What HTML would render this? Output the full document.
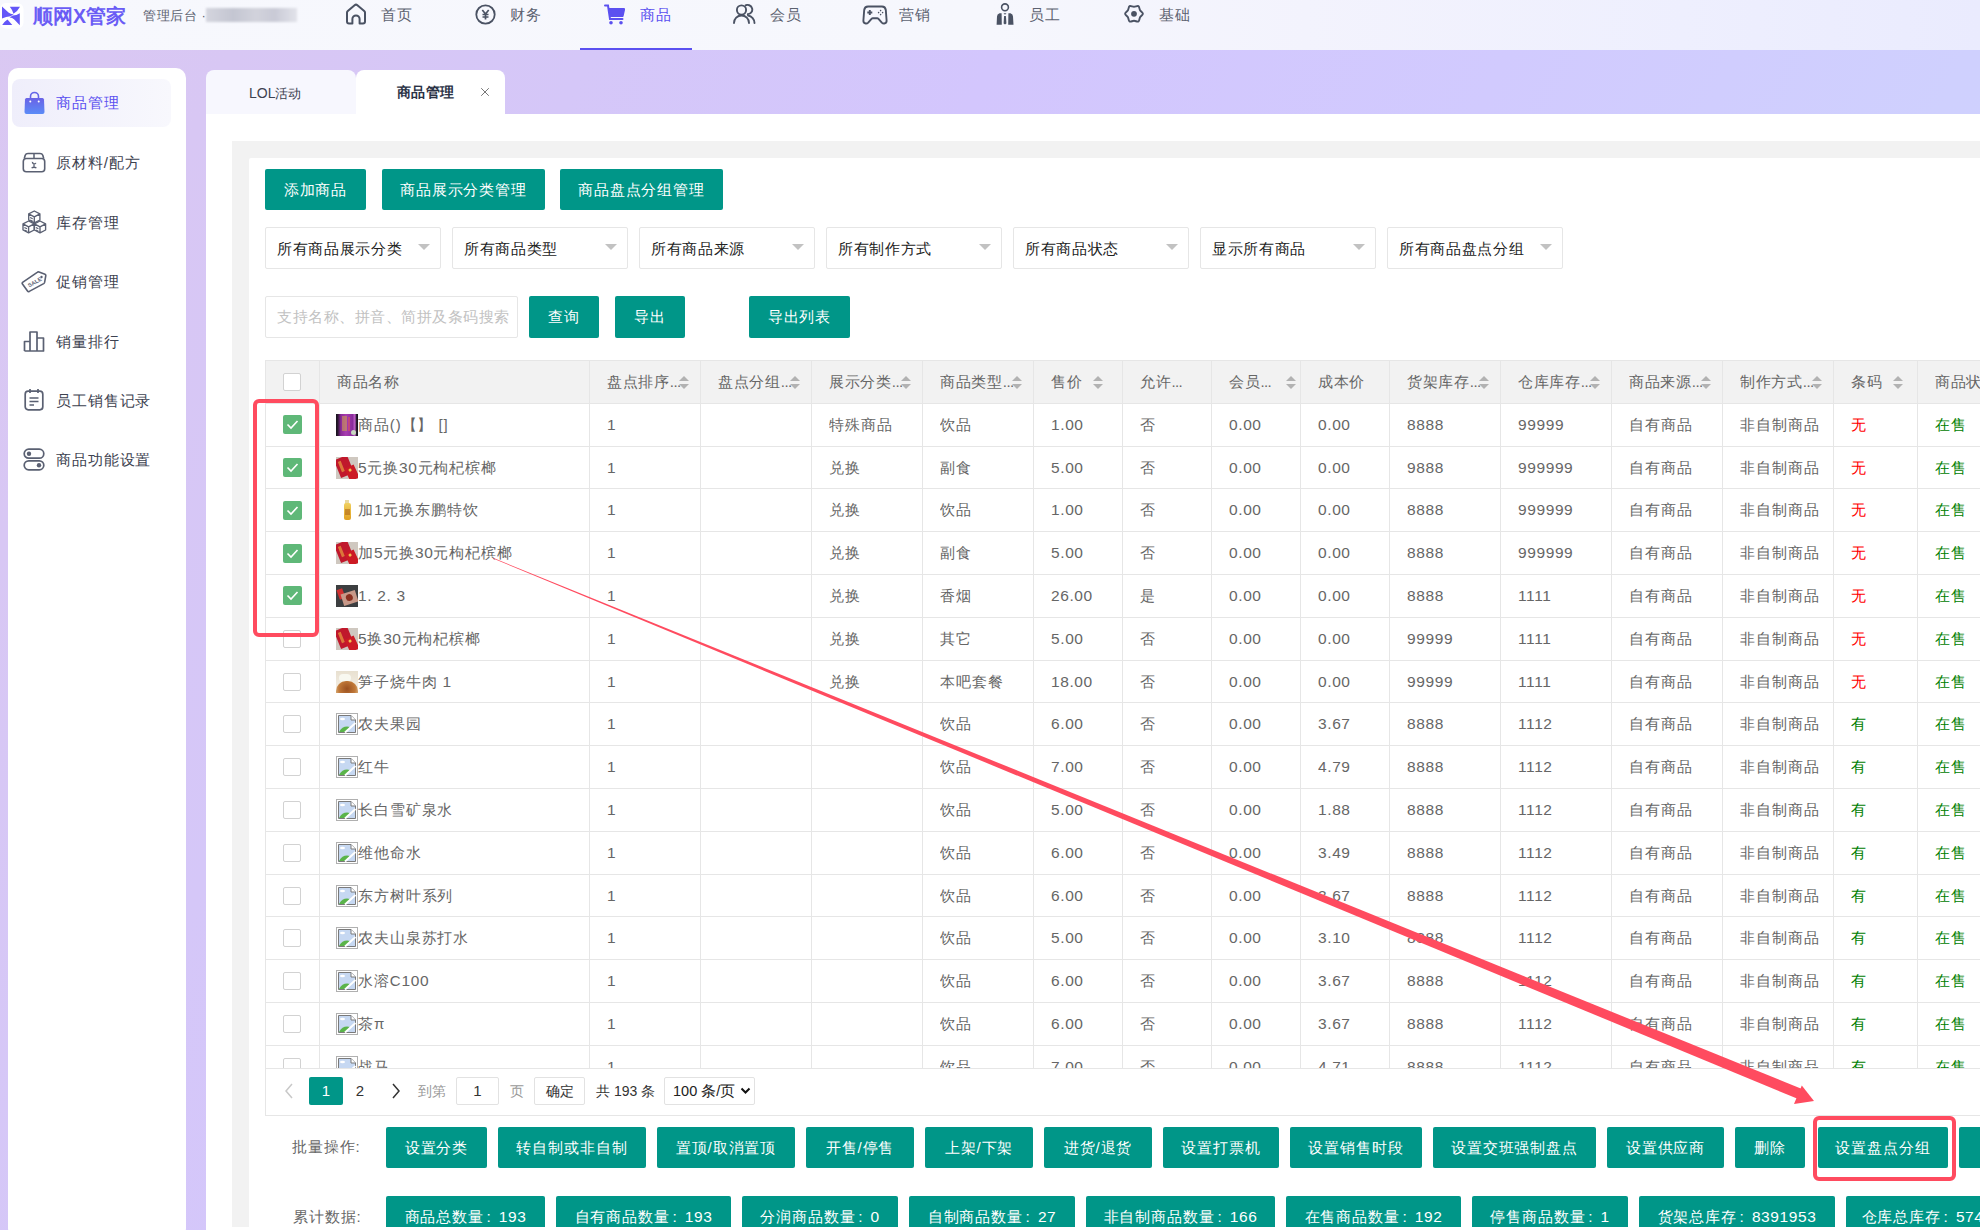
<!DOCTYPE html><html><head><meta charset="utf-8"><title>商品管理</title><style>
*{box-sizing:border-box;margin:0;padding:0}
html,body{width:1980px;height:1230px;overflow:hidden}
body{position:relative;font-family:"Liberation Sans",sans-serif;font-size:15px;color:#333;
 background:linear-gradient(115deg,#dac8f2 0%,#d8c7f4 10%,#d5c7f8 24%,#d3c6fd 40%,#d1cafe 60%,#cfd0fe 78%,#cfd2fe 100%)}
.abs{position:absolute}
.hdr{position:absolute;left:0;top:0;width:1980px;height:50px;background:linear-gradient(90deg,#f7f8fd 0%,#f6f7fd 50%,#f3f3fd 66%,#eeeffe 85%,#eaebfe 100%)}
.nav{position:absolute;top:7px;font-size:15px;line-height:16px;color:#5c6270;white-space:nowrap}
.nav.on{color:#5b50f0}
.ico{position:absolute}
.side{position:absolute;left:8px;top:68px;width:178px;height:1170px;background:#fff;border-radius:10px}
.sitem{position:absolute;left:56px;font-size:15px;line-height:20px;color:#3d4250;white-space:nowrap}
.tab{position:absolute;top:70px;height:44px;border-radius:8px 8px 0 0}
.main{position:absolute;left:206px;top:114px;width:1774px;height:1116px;background:#fff}
.gray{position:absolute;left:232px;top:141px;width:1748px;height:1086px;background:#f2f2f2;overflow:hidden}
.inner{position:absolute;left:249px;top:158px;width:1731px;height:1069px;background:#fff;border-radius:2px 0 0 0;overflow:hidden}
.btn{position:absolute;height:41px;background:#009688;color:#fff;border-radius:2px;font-size:15px;line-height:41px;text-align:center;white-space:nowrap}
.sel{position:absolute;top:227px;width:176px;height:42px;border:1px solid #e6e6e6;background:#fff;border-radius:2px}
.sel span{position:absolute;left:11px;top:10.5px;line-height:20px;font-size:15px;color:#222;white-space:nowrap;letter-spacing:0.65px!important}
.sel i{position:absolute;right:10px;top:16px;width:0;height:0;border-left:6px solid transparent;border-right:6px solid transparent;border-top:6px solid #c2c2c2}
.cell{position:absolute;font-size:15px;line-height:20px;color:#666;white-space:nowrap;overflow:hidden}
.hline{position:absolute;height:1px;background:#e6e6e6}
.vline{position:absolute;width:1px;background:#e6e6e6}
.cb{position:absolute;width:18px;height:18px;border:1px solid #d2d2d2;border-radius:2px;background:#fff}
.cbon{position:absolute;width:19px;height:19px;border-radius:2px;background:#5fb878}
.sort{position:absolute;width:10px;height:13px}
.sort:before{content:"";position:absolute;left:0;top:0;border-left:5px solid transparent;border-right:5px solid transparent;border-bottom:5px solid #b2b2b2}
.sort:after{content:"";position:absolute;left:0;top:8px;border-left:5px solid transparent;border-right:5px solid transparent;border-top:5px solid #b2b2b2}
.red{color:#ff0000}.green{color:#008000}
.cj{letter-spacing:0.9px}
.n{font-size:15.5px;letter-spacing:0.6px}
.co{display:inline-block;margin-left:2.5px;margin-right:8px;font-size:15.5px;letter-spacing:0}
.btn,.cell,.sel span,.sitem,.nav{letter-spacing:0.9px}
</style></head><body>
<div class="hdr"></div>
<svg class="ico" style="left:0px;top:3px" width="24" height="26" viewBox="0 3 24 26">
<rect x="0" y="3" width="23.5" height="25.5" rx="6" fill="#fff"/>
<path d="M9.8 6.8 H20 Q17.5 11.5 13.5 13.8 Q12.5 10 9.8 6.8 Z" fill="#6356f8"/>
<path d="M2 6.6 L8.5 12.6 Q11 14.6 13.8 14.3 L10.5 16.2 Q6 16.4 2 18.6 Z" fill="#6356f8"/>
<path d="M19.8 13.2 V25.2 L14 19.2 Q12 17.4 9.5 17.6 L12.8 15.6 Q16.5 15.3 19.8 13.2 Z" fill="#6356f8"/>
<path d="M2.2 25 H12.3 L7.5 19.6 Q4.5 21.5 2.2 25 Z" fill="#6356f8"/>
</svg>
<div class="abs" style="left:33px;top:5px;font-size:19.5px;line-height:22px;font-weight:bold;color:#6a5cf5;letter-spacing:0px;white-space:nowrap">顺网X管家</div>
<div class="abs" style="left:143px;top:7.5px;font-size:13px;line-height:16px;color:#5c6270;letter-spacing:0.6px;white-space:nowrap">管理后台 ·</div>
<div class="abs" style="left:206px;top:8px;width:91px;height:14px;background:linear-gradient(90deg,#d4d5de,#c4c6d2 30%,#d2d3dc 55%,#c9cad6 75%,#e2e3ea);filter:blur(1.2px)"></div>
<div class="nav" style="left:381px">首页</div>
<svg class="ico" style="left:345px;top:3px" width="22" height="22" viewBox="0 0 22 22"><path d="M2 9.6 Q2 8.6 2.8 7.9 L9.6 2.2 Q11 1.1 12.4 2.2 L19.2 7.9 Q20 8.6 20 9.6 V18.6 Q20 20.6 18 20.6 H14.6 V16 a3.6 3.6 0 0 0 -7.2 0 V20.6 H4 Q2 20.6 2 18.6 Z" fill="none" stroke="#4a5263" stroke-width="2" stroke-linejoin="round"/></svg>
<div class="nav" style="left:510px">财务</div>
<svg class="ico" style="left:475px;top:4px" width="21" height="21" viewBox="0 0 21 21"><circle cx="10.5" cy="10.5" r="9.2" fill="none" stroke="#4a5263" stroke-width="1.8"/><path d="M7.3 6 L10.5 10 L13.7 6 M10.5 10 V15.5 M7.5 10.5 H13.5 M7.5 13 H13.5" fill="none" stroke="#4a5263" stroke-width="1.7"/></svg>
<div class="nav on" style="left:640px">商品</div>
<svg class="ico" style="left:604px;top:4px" width="22" height="21" viewBox="0 0 22 21"><path d="M1 1.5 H4 L6 15 H18.5" fill="none" stroke="#5b50f0" stroke-width="2" stroke-linecap="round"/><path d="M4.5 4 H20 Q21.5 4 21 6 L19.5 12.5 Q19 13 18 13 H6.2 Z" fill="#5b50f0"/><circle cx="7" cy="18.8" r="1.8" fill="#5b50f0"/><circle cx="17" cy="18.8" r="1.8" fill="#5b50f0"/></svg>
<div class="nav" style="left:770px">会员</div>
<svg class="ico" style="left:733px;top:4px" width="23" height="20" viewBox="0 0 23 20"><circle cx="8.5" cy="6" r="4.6" fill="none" stroke="#4a5263" stroke-width="1.9"/><path d="M1 19 a7.5 7.5 0 0 1 15 0" fill="none" stroke="#4a5263" stroke-width="1.9" stroke-linecap="round"/><path d="M12 1.8 a4.6 4.6 0 1 1 2 8.3" fill="none" stroke="#4a5263" stroke-width="1.9"/><path d="M15 11.5 a7.5 7.5 0 0 1 6.5 7.5" fill="none" stroke="#4a5263" stroke-width="1.9" stroke-linecap="round"/></svg>
<div class="nav" style="left:899px">营销</div>
<svg class="ico" style="left:862px;top:5px" width="26" height="20" viewBox="0 0 26 20"><path d="M6 1.5 H20 Q23.3 1.5 23.8 5 L24.6 15.5 Q24.8 18.2 22.2 18.5 Q20.8 18.6 19.8 17.6 L16.5 13.8 Q16 13.3 15.2 13.3 H10.8 Q10 13.3 9.5 13.8 L6.2 17.6 Q5.2 18.6 3.8 18.5 Q1.2 18.2 1.4 15.5 L2.2 5 Q2.7 1.5 6 1.5 Z" fill="none" stroke="#4a5263" stroke-width="1.9" stroke-linejoin="round"/><path d="M7.8 5 V10 M5.3 7.5 H10.3" stroke="#4a5263" stroke-width="1.9"/><circle cx="18.6" cy="5.6" r="0.8" fill="#4a5263"/><circle cx="18.6" cy="9.6" r="0.8" fill="#4a5263"/><circle cx="16.6" cy="7.6" r="0.8" fill="#4a5263"/><circle cx="20.6" cy="7.6" r="0.8" fill="#4a5263"/></svg>
<div class="nav" style="left:1029px">员工</div>
<svg class="ico" style="left:996px;top:2px" width="19" height="24" viewBox="0 0 19 24"><circle cx="9" cy="5.3" r="3.4" fill="none" stroke="#4a5263" stroke-width="1.6"/><path d="M3.5 11.2 Q1 12 1 14.5 L0.6 22.8 H5.8 L5.6 11.2 Z" fill="#4a5263"/><path d="M14.5 11.2 Q17 12 17 14.5 L17.5 22.8 H12.2 L12.4 11.2 Z" fill="#4a5263"/><path d="M7.5 11.3 H10.5 L9 12.8 Z" fill="#4a5263"/><path d="M8.1 14 H9.9 L10.4 21.5 L9 22.6 L7.6 21.5 Z" fill="#4a5263"/></svg>
<div class="nav" style="left:1159px">基础</div>
<svg class="ico" style="left:1123px;top:3px" width="22" height="22" viewBox="0 0 22 22"><path d="M19.90 10.80 C19.90 11.97 17.80 13.02 17.06 14.30 C16.32 15.58 16.46 17.92 15.45 18.51 C14.44 19.09 12.48 17.80 11.00 17.80 C9.52 17.80 7.56 19.09 6.55 18.51 C5.54 17.92 5.68 15.58 4.94 14.30 C4.20 13.02 2.10 11.97 2.10 10.80 C2.10 9.63 4.20 8.58 4.94 7.30 C5.68 6.02 5.54 3.68 6.55 3.09 C7.56 2.51 9.52 3.80 11.00 3.80 C12.48 3.80 14.44 2.51 15.45 3.09 C16.46 3.68 16.32 6.02 17.06 7.30 C17.80 8.58 19.90 9.63 19.90 10.80 Z" fill="none" stroke="#4a5263" stroke-width="1.9"/><circle cx="11" cy="10.8" r="2.9" fill="#4a5263"/></svg>
<div class="abs" style="left:580px;top:48px;width:112px;height:2px;background:#5b50f0"></div>
<div class="side"></div>
<div class="abs" style="left:12px;top:79px;width:159px;height:48px;border-radius:8px;background:linear-gradient(90deg,#efeefb,#f8f8fd)"></div>
<div class="sitem" style="top:93px;color:#5b50f0">商品管理</div>
<svg class="ico" style="left:24px;top:91px" width="21" height="24" viewBox="0 0 21 24"><defs><linearGradient id="bg1" x1="0" y1="0" x2="0" y2="1"><stop offset="0" stop-color="#6a62e6"/><stop offset="1" stop-color="#5b8cf7"/></linearGradient></defs><path d="M6.5 8 V5.5 a4 4 0 0 1 8 0 V8" fill="none" stroke="#6466e8" stroke-width="1.6"/><path d="M2.5 7 H18.5 Q19.8 7 20 8.5 L20.5 21 Q20.5 23 18.5 23 H2.5 Q0.5 23 0.5 21 L1 8.5 Q1.2 7 2.5 7 Z" fill="url(#bg1)"/><circle cx="6.3" cy="10.5" r="1" fill="#fff"/><circle cx="14.7" cy="10.5" r="1" fill="#fff"/></svg>
<div class="sitem" style="top:153px;color:#3d4250">原材料/配方</div>
<svg class="ico" style="left:22px;top:152px" width="24" height="21" viewBox="0 0 24 21"><path d="M2.3 6.5 L3.2 3.2 Q3.9 1.5 6 1.5 H18 Q20.1 1.5 20.8 3.2 L21.7 6.5" fill="none" stroke="#5a6072" stroke-width="1.6" stroke-linejoin="round"/><rect x="1.3" y="6.5" width="21.4" height="13.2" rx="3" fill="none" stroke="#5a6072" stroke-width="1.6"/><path d="M12 1.5 V6.5" stroke="#5a6072" stroke-width="1.5"/><path d="M9.6 9.8 Q11.2 9.3 12 11.6 Q13 10.6 14.5 10.9 Q13.6 12.7 12 12.6 Q10 12.4 9.6 9.8 Z" fill="#5a6072"/><path d="M12 12.3 V15.2 M9.6 15.8 Q12 14.7 14.4 15.8" fill="none" stroke="#5a6072" stroke-width="1.3"/></svg>
<div class="sitem" style="top:213px;color:#3d4250">库存管理</div>
<svg class="ico" style="left:22px;top:210px" width="25" height="24" viewBox="0 0 25 24"><path d="M12.3 1 L17.9 3.9 V10 L12.3 12.8 L6.700000000000001 10 V3.9 Z M6.700000000000001 3.9 L12.3 6.8 L17.9 3.9 M12.3 6.8 V12.8" fill="none" stroke="#5a6072" stroke-width="1.35" stroke-linejoin="round"/><path d="M8.100000000000001 7.5 L10.700000000000001 8.8 M8.100000000000001 10 L10.700000000000001 11.3" stroke="#5a6072" stroke-width="1.2"/><path d="M6.6 11 L12.2 13.9 V20 L6.6 22.8 L1.0 20 V13.9 Z M1.0 13.9 L6.6 16.8 L12.2 13.9 M6.6 16.8 V22.8" fill="none" stroke="#5a6072" stroke-width="1.35" stroke-linejoin="round"/><path d="M2.3999999999999995 17.5 L5.0 18.8 M2.3999999999999995 20 L5.0 21.3" stroke="#5a6072" stroke-width="1.2"/><path d="M18 11 L23.6 13.9 V20 L18 22.8 L12.4 20 V13.9 Z M12.4 13.9 L18 16.8 L23.6 13.9 M18 16.8 V22.8" fill="none" stroke="#5a6072" stroke-width="1.35" stroke-linejoin="round"/><path d="M13.8 17.5 L16.4 18.8 M13.8 20 L16.4 21.3" stroke="#5a6072" stroke-width="1.2"/></svg>
<div class="sitem" style="top:272px;color:#3d4250">促销管理</div>
<svg class="ico" style="left:21px;top:270px" width="26" height="23" viewBox="0 0 26 23"><path d="M1.6 12.4 L16.2 2.3 Q17 1.7 18 2 L24 4.2 Q24.9 4.6 24.8 5.6 L23.6 12.4 Q23.4 13.2 22.7 13.6 L8.3 21.4 Q7.2 21.9 6.5 21 L1.3 13.8 Q0.9 13 1.6 12.4 Z" fill="none" stroke="#5a6072" stroke-width="1.6" stroke-linejoin="round"/><circle cx="20.5" cy="7" r="1.2" fill="#5a6072"/><text x="0" y="0" font-size="5.6" font-weight="bold" fill="#5a6072" font-family="Liberation Sans" transform="translate(8.2 17.6) rotate(-30)">SALE</text></svg>
<div class="sitem" style="top:332px;color:#3d4250">销量排行</div>
<svg class="ico" style="left:23px;top:330px" width="22" height="22" viewBox="0 0 22 22"><path d="M1.5 21 V11.5 H7 V21 M7 21 V2 H14 V21 M14 21 V8 H20.5 V21 H1.5" fill="none" stroke="#5a6072" stroke-width="1.7" stroke-linejoin="round"/></svg>
<div class="sitem" style="top:391px;color:#3d4250">员工销售记录</div>
<svg class="ico" style="left:24px;top:388px" width="20" height="23" viewBox="0 0 20 23"><rect x="1.2" y="3.2" width="17.6" height="18.6" rx="3" fill="none" stroke="#5a6072" stroke-width="1.7"/><path d="M6 1 V5 M14 1 V5" stroke="#5a6072" stroke-width="1.7"/><path d="M5.5 10 H14.5 M5.5 13.5 H14.5 M5.5 17 H10" stroke="#5a6072" stroke-width="1.6"/></svg>
<div class="sitem" style="top:450px;color:#3d4250">商品功能设置</div>
<svg class="ico" style="left:23px;top:448px" width="22" height="23" viewBox="0 0 22 23"><rect x="1.2" y="1.2" width="19.6" height="9" rx="4.5" fill="none" stroke="#5a6072" stroke-width="1.7"/><circle cx="6" cy="5.7" r="2.2" fill="#5a6072"/><rect x="1.2" y="12.8" width="19.6" height="9" rx="4.5" fill="none" stroke="#5a6072" stroke-width="1.7"/><circle cx="16" cy="17.3" r="2.2" fill="#5a6072"/></svg>
<div class="tab" style="left:206px;width:150px;background:#f7f7fe"></div>
<div class="abs" style="left:249px;top:83px;font-size:14px;line-height:20px;color:#3d4250;white-space:nowrap">LOL<span style="font-size:13.4px">活动</span></div>
<div class="main"></div>
<div class="tab" style="left:356px;width:149px;background:#fff"></div>
<div class="abs" style="left:397px;top:83px;font-size:13.5px;line-height:20px;color:#2a3245;font-weight:bold;letter-spacing:0.3px;white-space:nowrap">商品管理</div>
<svg class="ico" style="left:480px;top:87px" width="10" height="10" viewBox="0 0 10 10"><path d="M1.2 1.2 L8.8 8.8 M8.8 1.2 L1.2 8.8" stroke="#666" stroke-width="0.9"/></svg>
<div class="gray"></div>
<div class="inner"></div>
<div class="btn" style="left:265px;top:169px;width:101px">添加商品</div>
<div class="btn" style="left:382px;top:169px;width:163px">商品展示分类管理</div>
<div class="btn" style="left:560px;top:169px;width:163px">商品盘点分组管理</div>
<div class="sel" style="left:265px"><span>所有商品展示分类</span><i></i></div>
<div class="sel" style="left:452px"><span>所有商品类型</span><i></i></div>
<div class="sel" style="left:639px"><span>所有商品来源</span><i></i></div>
<div class="sel" style="left:826px"><span>所有制作方式</span><i></i></div>
<div class="sel" style="left:1013px"><span>所有商品状态</span><i></i></div>
<div class="sel" style="left:1200px"><span>显示所有商品</span><i></i></div>
<div class="sel" style="left:1387px"><span>所有商品盘点分组</span><i></i></div>
<div class="abs" style="left:265px;top:296px;width:253px;height:42px;border:1px solid #e6e6e6;border-radius:2px;background:#fff"></div>
<div class="abs" style="left:277px;top:307px;font-size:15px;line-height:20px;color:#c2c2c2;letter-spacing:0.5px;white-space:nowrap">支持名称、拼音、简拼及条码搜索</div>
<div class="btn" style="left:529px;top:296px;width:70px;height:42px;line-height:42px">查询</div>
<div class="btn" style="left:615px;top:296px;width:70px;height:42px;line-height:42px">导出</div>
<div class="btn" style="left:749px;top:296px;width:101px;height:42px;line-height:42px">导出列表</div>
<div class="abs" style="left:265px;top:360.3px;width:1715px;height:43.0px;background:#f2f2f2"></div>
<div class="abs" style="left:0;top:0;width:1980px;height:1068.6px;overflow:hidden">
<div class="hline" style="left:265px;top:360.3px;width:1715px"></div>
<div class="hline" style="left:265px;top:402.8px;width:1715px"></div>
<div class="hline" style="left:265px;top:445.6px;width:1715px"></div>
<div class="hline" style="left:265px;top:488.4px;width:1715px"></div>
<div class="hline" style="left:265px;top:531.2px;width:1715px"></div>
<div class="hline" style="left:265px;top:574.0px;width:1715px"></div>
<div class="hline" style="left:265px;top:616.8px;width:1715px"></div>
<div class="hline" style="left:265px;top:659.6px;width:1715px"></div>
<div class="hline" style="left:265px;top:702.4px;width:1715px"></div>
<div class="hline" style="left:265px;top:745.2px;width:1715px"></div>
<div class="hline" style="left:265px;top:788.0px;width:1715px"></div>
<div class="hline" style="left:265px;top:830.8px;width:1715px"></div>
<div class="hline" style="left:265px;top:873.6px;width:1715px"></div>
<div class="hline" style="left:265px;top:916.4px;width:1715px"></div>
<div class="hline" style="left:265px;top:959.2px;width:1715px"></div>
<div class="hline" style="left:265px;top:1002.0px;width:1715px"></div>
<div class="hline" style="left:265px;top:1044.8px;width:1715px"></div>
<div class="hline" style="left:265px;top:1087.6px;width:1715px"></div>
<div class="vline" style="left:265px;top:360.3px;height:708.3px"></div>
<div class="vline" style="left:319px;top:360.3px;height:708.3px"></div>
<div class="vline" style="left:589px;top:360.3px;height:708.3px"></div>
<div class="vline" style="left:700px;top:360.3px;height:708.3px"></div>
<div class="vline" style="left:811px;top:360.3px;height:708.3px"></div>
<div class="vline" style="left:922px;top:360.3px;height:708.3px"></div>
<div class="vline" style="left:1033px;top:360.3px;height:708.3px"></div>
<div class="vline" style="left:1122px;top:360.3px;height:708.3px"></div>
<div class="vline" style="left:1211px;top:360.3px;height:708.3px"></div>
<div class="vline" style="left:1300px;top:360.3px;height:708.3px"></div>
<div class="vline" style="left:1389px;top:360.3px;height:708.3px"></div>
<div class="vline" style="left:1500px;top:360.3px;height:708.3px"></div>
<div class="vline" style="left:1611px;top:360.3px;height:708.3px"></div>
<div class="vline" style="left:1722px;top:360.3px;height:708.3px"></div>
<div class="vline" style="left:1833px;top:360.3px;height:708.3px"></div>
<div class="vline" style="left:1917px;top:360.3px;height:708.3px"></div>
<div class="cb" style="left:283px;top:373px"></div>
<div class="cell" style="left:337px;top:371.8px;letter-spacing:0.7px">商品名称</div>
<div class="cell" style="left:607px;top:371.8px;letter-spacing:0.7px">盘点排序<span style="letter-spacing:-0.6px">...</span></div>
<div class="sort" style="left:679px;top:376px"></div>
<div class="cell" style="left:718px;top:371.8px;letter-spacing:0.7px">盘点分组<span style="letter-spacing:-0.6px">...</span></div>
<div class="sort" style="left:790px;top:376px"></div>
<div class="cell" style="left:829px;top:371.8px;letter-spacing:0.7px">展示分类<span style="letter-spacing:-0.6px">...</span></div>
<div class="sort" style="left:901px;top:376px"></div>
<div class="cell" style="left:940px;top:371.8px;letter-spacing:0.7px">商品类型<span style="letter-spacing:-0.6px">...</span></div>
<div class="sort" style="left:1012px;top:376px"></div>
<div class="cell" style="left:1051px;top:371.8px;letter-spacing:0.7px">售价</div>
<div class="sort" style="left:1093px;top:376px"></div>
<div class="cell" style="left:1140px;top:371.8px;letter-spacing:0.7px">允许<span style="letter-spacing:-0.6px">...</span></div>
<div class="cell" style="left:1229px;top:371.8px;letter-spacing:0.7px">会员<span style="letter-spacing:-0.6px">...</span></div>
<div class="sort" style="left:1286px;top:376px"></div>
<div class="cell" style="left:1318px;top:371.8px;letter-spacing:0.7px">成本价</div>
<div class="cell" style="left:1407px;top:371.8px;letter-spacing:0.7px">货架库存<span style="letter-spacing:-0.6px">...</span></div>
<div class="sort" style="left:1479px;top:376px"></div>
<div class="cell" style="left:1518px;top:371.8px;letter-spacing:0.7px">仓库库存<span style="letter-spacing:-0.6px">...</span></div>
<div class="sort" style="left:1590px;top:376px"></div>
<div class="cell" style="left:1629px;top:371.8px;letter-spacing:0.7px">商品来源<span style="letter-spacing:-0.6px">...</span></div>
<div class="sort" style="left:1701px;top:376px"></div>
<div class="cell" style="left:1740px;top:371.8px;letter-spacing:0.7px">制作方式<span style="letter-spacing:-0.6px">...</span></div>
<div class="sort" style="left:1812px;top:376px"></div>
<div class="cell" style="left:1851px;top:371.8px;letter-spacing:0.7px">条码</div>
<div class="sort" style="left:1893px;top:376px"></div>
<div class="cell" style="left:1935px;top:371.8px;letter-spacing:0.7px">商品状态</div>
<div class="cbon" style="left:283px;top:415.2px"><svg width="19" height="19" viewBox="0 0 19 19" style="position:absolute;left:0;top:0"><path d="M4.5 9.5 L8 13 L14.5 6" fill="none" stroke="#fff" stroke-width="1.6"/></svg></div>
<div class="abs" style="left:336px;top:413.7px;width:22px;height:22px;overflow:hidden;background:linear-gradient(90deg,#15121a 0,#2a1830 8%,#8a2a98 22%,#a83cb0 45%,#8a2c9c 75%,#c060c8 86%,#1a1420 94%)"><div class="abs" style="left:6px;top:2px;width:5px;height:15px;background:#d0a848;opacity:.55"></div><div class="abs" style="left:12px;top:3px;width:2px;height:14px;background:#e05060;opacity:.6"></div><div class="abs" style="left:15px;top:16px;width:5px;height:5px;border-radius:3px;background:#c8d8c0"></div></div>
<div class="cell" style="left:358px;top:414.7px">商品()【】 []</div>
<div class="cell" style="left:607px;top:414.7px"><span class="n">1</span></div>
<div class="cell" style="left:829px;top:414.7px">特殊商品</div>
<div class="cell" style="left:940px;top:414.7px">饮品</div>
<div class="cell" style="left:1051px;top:414.7px"><span class="n">1.00</span></div>
<div class="cell" style="left:1140px;top:414.7px">否</div>
<div class="cell" style="left:1229px;top:414.7px"><span class="n">0.00</span></div>
<div class="cell" style="left:1318px;top:414.7px"><span class="n">0.00</span></div>
<div class="cell" style="left:1407px;top:414.7px"><span class="n">8888</span></div>
<div class="cell" style="left:1518px;top:414.7px"><span class="n">99999</span></div>
<div class="cell" style="left:1629px;top:414.7px">自有商品</div>
<div class="cell" style="left:1740px;top:414.7px">非自制商品</div>
<div class="cell red" style="left:1851px;top:414.7px;color:#ff0000">无</div>
<div class="cell" style="left:1935px;top:414.7px;color:#008000">在售</div>
<div class="cbon" style="left:283px;top:458.0px"><svg width="19" height="19" viewBox="0 0 19 19" style="position:absolute;left:0;top:0"><path d="M4.5 9.5 L8 13 L14.5 6" fill="none" stroke="#fff" stroke-width="1.6"/></svg></div>
<div class="abs" style="left:336px;top:456.5px;width:22px;height:22px;background:#cfc8c0;overflow:hidden"><div class="abs" style="left:1px;top:0px;width:14px;height:19px;background:#c0182c;transform:rotate(-22deg)"><div class="abs" style="left:3px;top:3px;width:3px;height:11px;background:#e8a040;opacity:.7"></div></div><div class="abs" style="left:11px;top:9px;width:10px;height:14px;background:#cc1a24;transform:rotate(-25deg)"><div class="abs" style="left:3px;top:2px;width:3px;height:3px;border-radius:2px;background:#f0c050"></div></div></div>
<div class="cell" style="left:358px;top:457.5px"><span class="n">5</span>元换<span class="n">30</span>元枸杞槟榔</div>
<div class="cell" style="left:607px;top:457.5px"><span class="n">1</span></div>
<div class="cell" style="left:829px;top:457.5px">兑换</div>
<div class="cell" style="left:940px;top:457.5px">副食</div>
<div class="cell" style="left:1051px;top:457.5px"><span class="n">5.00</span></div>
<div class="cell" style="left:1140px;top:457.5px">否</div>
<div class="cell" style="left:1229px;top:457.5px"><span class="n">0.00</span></div>
<div class="cell" style="left:1318px;top:457.5px"><span class="n">0.00</span></div>
<div class="cell" style="left:1407px;top:457.5px"><span class="n">9888</span></div>
<div class="cell" style="left:1518px;top:457.5px"><span class="n">999999</span></div>
<div class="cell" style="left:1629px;top:457.5px">自有商品</div>
<div class="cell" style="left:1740px;top:457.5px">非自制商品</div>
<div class="cell red" style="left:1851px;top:457.5px;color:#ff0000">无</div>
<div class="cell" style="left:1935px;top:457.5px;color:#008000">在售</div>
<div class="cbon" style="left:283px;top:500.8px"><svg width="19" height="19" viewBox="0 0 19 19" style="position:absolute;left:0;top:0"><path d="M4.5 9.5 L8 13 L14.5 6" fill="none" stroke="#fff" stroke-width="1.6"/></svg></div>
<div class="abs" style="left:336px;top:499.3px;width:22px;height:22px;background:#fff"><div class="abs" style="left:9px;top:1px;width:4px;height:4px;background:#e8d8a0"></div><div class="abs" style="left:7.5px;top:4px;width:7px;height:17px;border-radius:2px;background:linear-gradient(#f0d060,#e0a020)"><div class="abs" style="left:1px;top:6px;width:5px;height:6px;background:#b06818;opacity:.6"></div></div></div>
<div class="cell" style="left:358px;top:500.3px">加<span class="n">1</span>元换东鹏特饮</div>
<div class="cell" style="left:607px;top:500.3px"><span class="n">1</span></div>
<div class="cell" style="left:829px;top:500.3px">兑换</div>
<div class="cell" style="left:940px;top:500.3px">饮品</div>
<div class="cell" style="left:1051px;top:500.3px"><span class="n">1.00</span></div>
<div class="cell" style="left:1140px;top:500.3px">否</div>
<div class="cell" style="left:1229px;top:500.3px"><span class="n">0.00</span></div>
<div class="cell" style="left:1318px;top:500.3px"><span class="n">0.00</span></div>
<div class="cell" style="left:1407px;top:500.3px"><span class="n">8888</span></div>
<div class="cell" style="left:1518px;top:500.3px"><span class="n">999999</span></div>
<div class="cell" style="left:1629px;top:500.3px">自有商品</div>
<div class="cell" style="left:1740px;top:500.3px">非自制商品</div>
<div class="cell red" style="left:1851px;top:500.3px;color:#ff0000">无</div>
<div class="cell" style="left:1935px;top:500.3px;color:#008000">在售</div>
<div class="cbon" style="left:283px;top:543.6px"><svg width="19" height="19" viewBox="0 0 19 19" style="position:absolute;left:0;top:0"><path d="M4.5 9.5 L8 13 L14.5 6" fill="none" stroke="#fff" stroke-width="1.6"/></svg></div>
<div class="abs" style="left:336px;top:542.1px;width:22px;height:22px;background:#cfc8c0;overflow:hidden"><div class="abs" style="left:1px;top:0px;width:14px;height:19px;background:#c0182c;transform:rotate(-22deg)"><div class="abs" style="left:3px;top:3px;width:3px;height:11px;background:#e8a040;opacity:.7"></div></div><div class="abs" style="left:11px;top:9px;width:10px;height:14px;background:#cc1a24;transform:rotate(-25deg)"><div class="abs" style="left:3px;top:2px;width:3px;height:3px;border-radius:2px;background:#f0c050"></div></div></div>
<div class="cell" style="left:358px;top:543.1px">加<span class="n">5</span>元换<span class="n">30</span>元枸杞槟榔</div>
<div class="cell" style="left:607px;top:543.1px"><span class="n">1</span></div>
<div class="cell" style="left:829px;top:543.1px">兑换</div>
<div class="cell" style="left:940px;top:543.1px">副食</div>
<div class="cell" style="left:1051px;top:543.1px"><span class="n">5.00</span></div>
<div class="cell" style="left:1140px;top:543.1px">否</div>
<div class="cell" style="left:1229px;top:543.1px"><span class="n">0.00</span></div>
<div class="cell" style="left:1318px;top:543.1px"><span class="n">0.00</span></div>
<div class="cell" style="left:1407px;top:543.1px"><span class="n">8888</span></div>
<div class="cell" style="left:1518px;top:543.1px"><span class="n">999999</span></div>
<div class="cell" style="left:1629px;top:543.1px">自有商品</div>
<div class="cell" style="left:1740px;top:543.1px">非自制商品</div>
<div class="cell red" style="left:1851px;top:543.1px;color:#ff0000">无</div>
<div class="cell" style="left:1935px;top:543.1px;color:#008000">在售</div>
<div class="cbon" style="left:283px;top:586.4px"><svg width="19" height="19" viewBox="0 0 19 19" style="position:absolute;left:0;top:0"><path d="M4.5 9.5 L8 13 L14.5 6" fill="none" stroke="#fff" stroke-width="1.6"/></svg></div>
<div class="abs" style="left:336px;top:584.9px;width:22px;height:22px;background:#3c3e40;overflow:hidden"><div class="abs" style="left:2px;top:4px;width:6px;height:10px;background:#d03030;transform:rotate(-20deg)"></div><div class="abs" style="left:6px;top:7px;width:15px;height:12px;background:#c89888;transform:rotate(-18deg)"><div class="abs" style="left:4px;top:2px;width:7px;height:7px;border-radius:4px;background:#8a3020"></div></div></div>
<div class="cell" style="left:358px;top:585.9px"><span class="n">1.</span> <span class="n">2.</span> <span class="n">3</span></div>
<div class="cell" style="left:607px;top:585.9px"><span class="n">1</span></div>
<div class="cell" style="left:829px;top:585.9px">兑换</div>
<div class="cell" style="left:940px;top:585.9px">香烟</div>
<div class="cell" style="left:1051px;top:585.9px"><span class="n">26.00</span></div>
<div class="cell" style="left:1140px;top:585.9px">是</div>
<div class="cell" style="left:1229px;top:585.9px"><span class="n">0.00</span></div>
<div class="cell" style="left:1318px;top:585.9px"><span class="n">0.00</span></div>
<div class="cell" style="left:1407px;top:585.9px"><span class="n">8888</span></div>
<div class="cell" style="left:1518px;top:585.9px"><span class="n">1111</span></div>
<div class="cell" style="left:1629px;top:585.9px">自有商品</div>
<div class="cell" style="left:1740px;top:585.9px">非自制商品</div>
<div class="cell red" style="left:1851px;top:585.9px;color:#ff0000">无</div>
<div class="cell" style="left:1935px;top:585.9px;color:#008000">在售</div>
<div class="cb" style="left:283px;top:629.7px"></div>
<div class="abs" style="left:336px;top:627.7px;width:22px;height:22px;background:#cfc8c0;overflow:hidden"><div class="abs" style="left:1px;top:0px;width:14px;height:19px;background:#c0182c;transform:rotate(-22deg)"><div class="abs" style="left:3px;top:3px;width:3px;height:11px;background:#e8a040;opacity:.7"></div></div><div class="abs" style="left:11px;top:9px;width:10px;height:14px;background:#cc1a24;transform:rotate(-25deg)"><div class="abs" style="left:3px;top:2px;width:3px;height:3px;border-radius:2px;background:#f0c050"></div></div></div>
<div class="cell" style="left:358px;top:628.7px"><span class="n">5</span>换<span class="n">30</span>元枸杞槟榔</div>
<div class="cell" style="left:607px;top:628.7px"><span class="n">1</span></div>
<div class="cell" style="left:829px;top:628.7px">兑换</div>
<div class="cell" style="left:940px;top:628.7px">其它</div>
<div class="cell" style="left:1051px;top:628.7px"><span class="n">5.00</span></div>
<div class="cell" style="left:1140px;top:628.7px">否</div>
<div class="cell" style="left:1229px;top:628.7px"><span class="n">0.00</span></div>
<div class="cell" style="left:1318px;top:628.7px"><span class="n">0.00</span></div>
<div class="cell" style="left:1407px;top:628.7px"><span class="n">99999</span></div>
<div class="cell" style="left:1518px;top:628.7px"><span class="n">1111</span></div>
<div class="cell" style="left:1629px;top:628.7px">自有商品</div>
<div class="cell" style="left:1740px;top:628.7px">非自制商品</div>
<div class="cell red" style="left:1851px;top:628.7px;color:#ff0000">无</div>
<div class="cell" style="left:1935px;top:628.7px;color:#008000">在售</div>
<div class="cb" style="left:283px;top:672.5px"></div>
<div class="abs" style="left:336px;top:670.5px;width:22px;height:22px;background:linear-gradient(#e8e0d0,#f6f2ea);overflow:hidden"><div class="abs" style="left:3px;top:3px;width:12px;height:8px;border-radius:6px;background:#f8f8f0"></div><div class="abs" style="left:0px;top:10px;width:22px;height:13px;border-radius:10px 10px 0 0;background:radial-gradient(circle at 50% 60%,#9a5020,#c07838 60%,#e0c090)"></div></div>
<div class="cell" style="left:358px;top:671.5px">笋子烧牛肉 <span class="n">1</span></div>
<div class="cell" style="left:607px;top:671.5px"><span class="n">1</span></div>
<div class="cell" style="left:829px;top:671.5px">兑换</div>
<div class="cell" style="left:940px;top:671.5px">本吧套餐</div>
<div class="cell" style="left:1051px;top:671.5px"><span class="n">18.00</span></div>
<div class="cell" style="left:1140px;top:671.5px">否</div>
<div class="cell" style="left:1229px;top:671.5px"><span class="n">0.00</span></div>
<div class="cell" style="left:1318px;top:671.5px"><span class="n">0.00</span></div>
<div class="cell" style="left:1407px;top:671.5px"><span class="n">99999</span></div>
<div class="cell" style="left:1518px;top:671.5px"><span class="n">1111</span></div>
<div class="cell" style="left:1629px;top:671.5px">自有商品</div>
<div class="cell" style="left:1740px;top:671.5px">非自制商品</div>
<div class="cell red" style="left:1851px;top:671.5px;color:#ff0000">无</div>
<div class="cell" style="left:1935px;top:671.5px;color:#008000">在售</div>
<div class="cb" style="left:283px;top:715.3px"></div>
<svg class="ico" style="left:336px;top:713.3px" width="22" height="22" viewBox="0 0 22 22"><rect x="0.5" y="0.5" width="21" height="21" fill="#fff" stroke="#b0b0b0"/><path d="M2.5 2.5 H15 L19.5 7 V19.5 H2.5 Z" fill="#c6d8f2" stroke="#7a7a7a" stroke-width="1"/><path d="M15 2.5 V7 H19.5" fill="#fff" stroke="#7a7a7a" stroke-width="1"/><path d="M3 19 Q7 12 14 14 L10 19 Z" fill="#5ab44a"/><path d="M9 19.5 L19.5 10" stroke="#fff" stroke-width="2"/><ellipse cx="6.5" cy="6" rx="2.5" ry="1.2" fill="#fff"/></svg>
<div class="cell" style="left:358px;top:714.3px">农夫果园</div>
<div class="cell" style="left:607px;top:714.3px"><span class="n">1</span></div>
<div class="cell" style="left:940px;top:714.3px">饮品</div>
<div class="cell" style="left:1051px;top:714.3px"><span class="n">6.00</span></div>
<div class="cell" style="left:1140px;top:714.3px">否</div>
<div class="cell" style="left:1229px;top:714.3px"><span class="n">0.00</span></div>
<div class="cell" style="left:1318px;top:714.3px"><span class="n">3.67</span></div>
<div class="cell" style="left:1407px;top:714.3px"><span class="n">8888</span></div>
<div class="cell" style="left:1518px;top:714.3px"><span class="n">1112</span></div>
<div class="cell" style="left:1629px;top:714.3px">自有商品</div>
<div class="cell" style="left:1740px;top:714.3px">非自制商品</div>
<div class="cell red" style="left:1851px;top:714.3px;color:#008000">有</div>
<div class="cell" style="left:1935px;top:714.3px;color:#008000">在售</div>
<div class="cb" style="left:283px;top:758.1px"></div>
<svg class="ico" style="left:336px;top:756.1px" width="22" height="22" viewBox="0 0 22 22"><rect x="0.5" y="0.5" width="21" height="21" fill="#fff" stroke="#b0b0b0"/><path d="M2.5 2.5 H15 L19.5 7 V19.5 H2.5 Z" fill="#c6d8f2" stroke="#7a7a7a" stroke-width="1"/><path d="M15 2.5 V7 H19.5" fill="#fff" stroke="#7a7a7a" stroke-width="1"/><path d="M3 19 Q7 12 14 14 L10 19 Z" fill="#5ab44a"/><path d="M9 19.5 L19.5 10" stroke="#fff" stroke-width="2"/><ellipse cx="6.5" cy="6" rx="2.5" ry="1.2" fill="#fff"/></svg>
<div class="cell" style="left:358px;top:757.1px">红牛</div>
<div class="cell" style="left:607px;top:757.1px"><span class="n">1</span></div>
<div class="cell" style="left:940px;top:757.1px">饮品</div>
<div class="cell" style="left:1051px;top:757.1px"><span class="n">7.00</span></div>
<div class="cell" style="left:1140px;top:757.1px">否</div>
<div class="cell" style="left:1229px;top:757.1px"><span class="n">0.00</span></div>
<div class="cell" style="left:1318px;top:757.1px"><span class="n">4.79</span></div>
<div class="cell" style="left:1407px;top:757.1px"><span class="n">8888</span></div>
<div class="cell" style="left:1518px;top:757.1px"><span class="n">1112</span></div>
<div class="cell" style="left:1629px;top:757.1px">自有商品</div>
<div class="cell" style="left:1740px;top:757.1px">非自制商品</div>
<div class="cell red" style="left:1851px;top:757.1px;color:#008000">有</div>
<div class="cell" style="left:1935px;top:757.1px;color:#008000">在售</div>
<div class="cb" style="left:283px;top:800.9px"></div>
<svg class="ico" style="left:336px;top:798.9px" width="22" height="22" viewBox="0 0 22 22"><rect x="0.5" y="0.5" width="21" height="21" fill="#fff" stroke="#b0b0b0"/><path d="M2.5 2.5 H15 L19.5 7 V19.5 H2.5 Z" fill="#c6d8f2" stroke="#7a7a7a" stroke-width="1"/><path d="M15 2.5 V7 H19.5" fill="#fff" stroke="#7a7a7a" stroke-width="1"/><path d="M3 19 Q7 12 14 14 L10 19 Z" fill="#5ab44a"/><path d="M9 19.5 L19.5 10" stroke="#fff" stroke-width="2"/><ellipse cx="6.5" cy="6" rx="2.5" ry="1.2" fill="#fff"/></svg>
<div class="cell" style="left:358px;top:799.9px">长白雪矿泉水</div>
<div class="cell" style="left:607px;top:799.9px"><span class="n">1</span></div>
<div class="cell" style="left:940px;top:799.9px">饮品</div>
<div class="cell" style="left:1051px;top:799.9px"><span class="n">5.00</span></div>
<div class="cell" style="left:1140px;top:799.9px">否</div>
<div class="cell" style="left:1229px;top:799.9px"><span class="n">0.00</span></div>
<div class="cell" style="left:1318px;top:799.9px"><span class="n">1.88</span></div>
<div class="cell" style="left:1407px;top:799.9px"><span class="n">8888</span></div>
<div class="cell" style="left:1518px;top:799.9px"><span class="n">1112</span></div>
<div class="cell" style="left:1629px;top:799.9px">自有商品</div>
<div class="cell" style="left:1740px;top:799.9px">非自制商品</div>
<div class="cell red" style="left:1851px;top:799.9px;color:#008000">有</div>
<div class="cell" style="left:1935px;top:799.9px;color:#008000">在售</div>
<div class="cb" style="left:283px;top:843.7px"></div>
<svg class="ico" style="left:336px;top:841.7px" width="22" height="22" viewBox="0 0 22 22"><rect x="0.5" y="0.5" width="21" height="21" fill="#fff" stroke="#b0b0b0"/><path d="M2.5 2.5 H15 L19.5 7 V19.5 H2.5 Z" fill="#c6d8f2" stroke="#7a7a7a" stroke-width="1"/><path d="M15 2.5 V7 H19.5" fill="#fff" stroke="#7a7a7a" stroke-width="1"/><path d="M3 19 Q7 12 14 14 L10 19 Z" fill="#5ab44a"/><path d="M9 19.5 L19.5 10" stroke="#fff" stroke-width="2"/><ellipse cx="6.5" cy="6" rx="2.5" ry="1.2" fill="#fff"/></svg>
<div class="cell" style="left:358px;top:842.7px">维他命水</div>
<div class="cell" style="left:607px;top:842.7px"><span class="n">1</span></div>
<div class="cell" style="left:940px;top:842.7px">饮品</div>
<div class="cell" style="left:1051px;top:842.7px"><span class="n">6.00</span></div>
<div class="cell" style="left:1140px;top:842.7px">否</div>
<div class="cell" style="left:1229px;top:842.7px"><span class="n">0.00</span></div>
<div class="cell" style="left:1318px;top:842.7px"><span class="n">3.49</span></div>
<div class="cell" style="left:1407px;top:842.7px"><span class="n">8888</span></div>
<div class="cell" style="left:1518px;top:842.7px"><span class="n">1112</span></div>
<div class="cell" style="left:1629px;top:842.7px">自有商品</div>
<div class="cell" style="left:1740px;top:842.7px">非自制商品</div>
<div class="cell red" style="left:1851px;top:842.7px;color:#008000">有</div>
<div class="cell" style="left:1935px;top:842.7px;color:#008000">在售</div>
<div class="cb" style="left:283px;top:886.5px"></div>
<svg class="ico" style="left:336px;top:884.5px" width="22" height="22" viewBox="0 0 22 22"><rect x="0.5" y="0.5" width="21" height="21" fill="#fff" stroke="#b0b0b0"/><path d="M2.5 2.5 H15 L19.5 7 V19.5 H2.5 Z" fill="#c6d8f2" stroke="#7a7a7a" stroke-width="1"/><path d="M15 2.5 V7 H19.5" fill="#fff" stroke="#7a7a7a" stroke-width="1"/><path d="M3 19 Q7 12 14 14 L10 19 Z" fill="#5ab44a"/><path d="M9 19.5 L19.5 10" stroke="#fff" stroke-width="2"/><ellipse cx="6.5" cy="6" rx="2.5" ry="1.2" fill="#fff"/></svg>
<div class="cell" style="left:358px;top:885.5px">东方树叶系列</div>
<div class="cell" style="left:607px;top:885.5px"><span class="n">1</span></div>
<div class="cell" style="left:940px;top:885.5px">饮品</div>
<div class="cell" style="left:1051px;top:885.5px"><span class="n">6.00</span></div>
<div class="cell" style="left:1140px;top:885.5px">否</div>
<div class="cell" style="left:1229px;top:885.5px"><span class="n">0.00</span></div>
<div class="cell" style="left:1318px;top:885.5px"><span class="n">3.67</span></div>
<div class="cell" style="left:1407px;top:885.5px"><span class="n">8888</span></div>
<div class="cell" style="left:1518px;top:885.5px"><span class="n">1112</span></div>
<div class="cell" style="left:1629px;top:885.5px">自有商品</div>
<div class="cell" style="left:1740px;top:885.5px">非自制商品</div>
<div class="cell red" style="left:1851px;top:885.5px;color:#008000">有</div>
<div class="cell" style="left:1935px;top:885.5px;color:#008000">在售</div>
<div class="cb" style="left:283px;top:929.3px"></div>
<svg class="ico" style="left:336px;top:927.3px" width="22" height="22" viewBox="0 0 22 22"><rect x="0.5" y="0.5" width="21" height="21" fill="#fff" stroke="#b0b0b0"/><path d="M2.5 2.5 H15 L19.5 7 V19.5 H2.5 Z" fill="#c6d8f2" stroke="#7a7a7a" stroke-width="1"/><path d="M15 2.5 V7 H19.5" fill="#fff" stroke="#7a7a7a" stroke-width="1"/><path d="M3 19 Q7 12 14 14 L10 19 Z" fill="#5ab44a"/><path d="M9 19.5 L19.5 10" stroke="#fff" stroke-width="2"/><ellipse cx="6.5" cy="6" rx="2.5" ry="1.2" fill="#fff"/></svg>
<div class="cell" style="left:358px;top:928.3px">农夫山泉苏打水</div>
<div class="cell" style="left:607px;top:928.3px"><span class="n">1</span></div>
<div class="cell" style="left:940px;top:928.3px">饮品</div>
<div class="cell" style="left:1051px;top:928.3px"><span class="n">5.00</span></div>
<div class="cell" style="left:1140px;top:928.3px">否</div>
<div class="cell" style="left:1229px;top:928.3px"><span class="n">0.00</span></div>
<div class="cell" style="left:1318px;top:928.3px"><span class="n">3.10</span></div>
<div class="cell" style="left:1407px;top:928.3px"><span class="n">8888</span></div>
<div class="cell" style="left:1518px;top:928.3px"><span class="n">1112</span></div>
<div class="cell" style="left:1629px;top:928.3px">自有商品</div>
<div class="cell" style="left:1740px;top:928.3px">非自制商品</div>
<div class="cell red" style="left:1851px;top:928.3px;color:#008000">有</div>
<div class="cell" style="left:1935px;top:928.3px;color:#008000">在售</div>
<div class="cb" style="left:283px;top:972.1px"></div>
<svg class="ico" style="left:336px;top:970.1px" width="22" height="22" viewBox="0 0 22 22"><rect x="0.5" y="0.5" width="21" height="21" fill="#fff" stroke="#b0b0b0"/><path d="M2.5 2.5 H15 L19.5 7 V19.5 H2.5 Z" fill="#c6d8f2" stroke="#7a7a7a" stroke-width="1"/><path d="M15 2.5 V7 H19.5" fill="#fff" stroke="#7a7a7a" stroke-width="1"/><path d="M3 19 Q7 12 14 14 L10 19 Z" fill="#5ab44a"/><path d="M9 19.5 L19.5 10" stroke="#fff" stroke-width="2"/><ellipse cx="6.5" cy="6" rx="2.5" ry="1.2" fill="#fff"/></svg>
<div class="cell" style="left:358px;top:971.1px">水溶C<span class="n">100</span></div>
<div class="cell" style="left:607px;top:971.1px"><span class="n">1</span></div>
<div class="cell" style="left:940px;top:971.1px">饮品</div>
<div class="cell" style="left:1051px;top:971.1px"><span class="n">6.00</span></div>
<div class="cell" style="left:1140px;top:971.1px">否</div>
<div class="cell" style="left:1229px;top:971.1px"><span class="n">0.00</span></div>
<div class="cell" style="left:1318px;top:971.1px"><span class="n">3.67</span></div>
<div class="cell" style="left:1407px;top:971.1px"><span class="n">8888</span></div>
<div class="cell" style="left:1518px;top:971.1px"><span class="n">1112</span></div>
<div class="cell" style="left:1629px;top:971.1px">自有商品</div>
<div class="cell" style="left:1740px;top:971.1px">非自制商品</div>
<div class="cell red" style="left:1851px;top:971.1px;color:#008000">有</div>
<div class="cell" style="left:1935px;top:971.1px;color:#008000">在售</div>
<div class="cb" style="left:283px;top:1014.9px"></div>
<svg class="ico" style="left:336px;top:1012.9px" width="22" height="22" viewBox="0 0 22 22"><rect x="0.5" y="0.5" width="21" height="21" fill="#fff" stroke="#b0b0b0"/><path d="M2.5 2.5 H15 L19.5 7 V19.5 H2.5 Z" fill="#c6d8f2" stroke="#7a7a7a" stroke-width="1"/><path d="M15 2.5 V7 H19.5" fill="#fff" stroke="#7a7a7a" stroke-width="1"/><path d="M3 19 Q7 12 14 14 L10 19 Z" fill="#5ab44a"/><path d="M9 19.5 L19.5 10" stroke="#fff" stroke-width="2"/><ellipse cx="6.5" cy="6" rx="2.5" ry="1.2" fill="#fff"/></svg>
<div class="cell" style="left:358px;top:1013.9px">茶π</div>
<div class="cell" style="left:607px;top:1013.9px"><span class="n">1</span></div>
<div class="cell" style="left:940px;top:1013.9px">饮品</div>
<div class="cell" style="left:1051px;top:1013.9px"><span class="n">6.00</span></div>
<div class="cell" style="left:1140px;top:1013.9px">否</div>
<div class="cell" style="left:1229px;top:1013.9px"><span class="n">0.00</span></div>
<div class="cell" style="left:1318px;top:1013.9px"><span class="n">3.67</span></div>
<div class="cell" style="left:1407px;top:1013.9px"><span class="n">8888</span></div>
<div class="cell" style="left:1518px;top:1013.9px"><span class="n">1112</span></div>
<div class="cell" style="left:1629px;top:1013.9px">自有商品</div>
<div class="cell" style="left:1740px;top:1013.9px">非自制商品</div>
<div class="cell red" style="left:1851px;top:1013.9px;color:#008000">有</div>
<div class="cell" style="left:1935px;top:1013.9px;color:#008000">在售</div>
<div class="cb" style="left:283px;top:1057.7px"></div>
<svg class="ico" style="left:336px;top:1055.7px" width="22" height="22" viewBox="0 0 22 22"><rect x="0.5" y="0.5" width="21" height="21" fill="#fff" stroke="#b0b0b0"/><path d="M2.5 2.5 H15 L19.5 7 V19.5 H2.5 Z" fill="#c6d8f2" stroke="#7a7a7a" stroke-width="1"/><path d="M15 2.5 V7 H19.5" fill="#fff" stroke="#7a7a7a" stroke-width="1"/><path d="M3 19 Q7 12 14 14 L10 19 Z" fill="#5ab44a"/><path d="M9 19.5 L19.5 10" stroke="#fff" stroke-width="2"/><ellipse cx="6.5" cy="6" rx="2.5" ry="1.2" fill="#fff"/></svg>
<div class="cell" style="left:358px;top:1056.7px">战马</div>
<div class="cell" style="left:607px;top:1056.7px"><span class="n">1</span></div>
<div class="cell" style="left:940px;top:1056.7px">饮品</div>
<div class="cell" style="left:1051px;top:1056.7px"><span class="n">7.00</span></div>
<div class="cell" style="left:1140px;top:1056.7px">否</div>
<div class="cell" style="left:1229px;top:1056.7px"><span class="n">0.00</span></div>
<div class="cell" style="left:1318px;top:1056.7px"><span class="n">4.71</span></div>
<div class="cell" style="left:1407px;top:1056.7px"><span class="n">8888</span></div>
<div class="cell" style="left:1518px;top:1056.7px"><span class="n">1112</span></div>
<div class="cell" style="left:1629px;top:1056.7px">自有商品</div>
<div class="cell" style="left:1740px;top:1056.7px">非自制商品</div>
<div class="cell red" style="left:1851px;top:1056.7px;color:#008000">有</div>
<div class="cell" style="left:1935px;top:1056.7px;color:#008000">在售</div>
</div>
<div class="abs" style="left:265px;top:1068.1px;width:1715px;height:47.5px;border:1px solid #e6e6e6;border-right:none;background:#fff"></div>
<svg class="ico" style="left:283px;top:1082px" width="12" height="18" viewBox="0 0 12 18"><path d="M9 2 L3 9 L9 16" fill="none" stroke="#c8c8c8" stroke-width="1.5"/></svg>
<div class="abs" style="left:309px;top:1077px;width:34px;height:28px;background:#009688;border-radius:2px;color:#fff;font-size:15px;line-height:28px;text-align:center">1</div>
<div class="abs" style="left:343px;top:1077px;width:34px;height:28px;color:#333;font-size:15px;line-height:28px;text-align:center">2</div>
<svg class="ico" style="left:390px;top:1082px" width="12" height="18" viewBox="0 0 12 18"><path d="M3 2 L9 9 L3 16" fill="none" stroke="#333" stroke-width="1.5"/></svg>
<div class="abs" style="left:418px;top:1081px;font-size:14px;line-height:20px;color:#999;white-space:nowrap">到第</div>
<div class="abs" style="left:456px;top:1077px;width:43px;height:28px;border:1px solid #e2e2e2;border-radius:2px;font-size:15px;line-height:26px;text-align:center;color:#333">1</div>
<div class="abs" style="left:510px;top:1081px;font-size:14px;line-height:20px;color:#999;white-space:nowrap">页</div>
<div class="abs" style="left:534px;top:1077px;width:51px;height:28px;border:1px solid #e2e2e2;border-radius:2px;font-size:14px;line-height:26px;text-align:center;color:#333">确定</div>
<div class="abs" style="left:596px;top:1081px;font-size:14px;line-height:20px;color:#333;white-space:nowrap">共 193 条</div>
<div class="abs" style="left:664px;top:1077px;width:91px;height:28px;border:1px solid #e2e2e2;border-radius:2px;font-size:14.5px;line-height:26px;color:#222;padding-left:8px;white-space:nowrap">100 条/页</div>
<svg class="ico" style="left:740px;top:1086px" width="11" height="9" viewBox="0 0 11 9"><path d="M1.5 2.5 L5.5 6.5 L9.5 2.5" fill="none" stroke="#111" stroke-width="2"/></svg>
<div class="abs" style="left:292px;top:1137px;font-size:15px;line-height:20px;color:#666;letter-spacing:0.9px;white-space:nowrap">批量操作:</div>
<div class="btn" style="left:386px;top:1127px;width:101px">设置分类</div>
<div class="btn" style="left:498px;top:1127px;width:148px">转自制或非自制</div>
<div class="btn" style="left:657px;top:1127px;width:138px">置顶/取消置顶</div>
<div class="btn" style="left:806px;top:1127px;width:108px">开售/停售</div>
<div class="btn" style="left:925px;top:1127px;width:108px">上架/下架</div>
<div class="btn" style="left:1044px;top:1127px;width:108px">进货/退货</div>
<div class="btn" style="left:1163px;top:1127px;width:116px">设置打票机</div>
<div class="btn" style="left:1290px;top:1127px;width:132px">设置销售时段</div>
<div class="btn" style="left:1433px;top:1127px;width:163px">设置交班强制盘点</div>
<div class="btn" style="left:1607px;top:1127px;width:117px">设置供应商</div>
<div class="btn" style="left:1735px;top:1127px;width:70px">删除</div>
<div class="btn" style="left:1818px;top:1127px;width:130px">设置盘点分组</div>
<div class="btn" style="left:1959px;top:1127px;width:100px">导出</div>
<div class="abs" style="left:0;top:0;width:1980px;height:1227px;overflow:hidden">
<div class="abs" style="left:293px;top:1207px;font-size:15px;line-height:20px;color:#666;letter-spacing:0.9px;white-space:nowrap">累计数据:</div>
<div class="btn" style="left:386px;top:1196px;width:159px;line-height:41px">商品总数量<span class="co">:</span><span class="n">193</span></div>
<div class="btn" style="left:556px;top:1196px;width:175px;line-height:41px">自有商品数量<span class="co">:</span><span class="n">193</span></div>
<div class="btn" style="left:742px;top:1196px;width:156px;line-height:41px">分润商品数量<span class="co">:</span><span class="n">0</span></div>
<div class="btn" style="left:909px;top:1196px;width:166px;line-height:41px">自制商品数量<span class="co">:</span><span class="n">27</span></div>
<div class="btn" style="left:1086px;top:1196px;width:189px;line-height:41px">非自制商品数量<span class="co">:</span><span class="n">166</span></div>
<div class="btn" style="left:1286px;top:1196px;width:175px;line-height:41px">在售商品数量<span class="co">:</span><span class="n">192</span></div>
<div class="btn" style="left:1472px;top:1196px;width:156px;line-height:41px">停售商品数量<span class="co">:</span><span class="n">1</span></div>
<div class="btn" style="left:1639px;top:1196px;width:196px;line-height:41px">货架总库存<span class="co">:</span><span class="n">8391953</span></div>
<div class="btn" style="left:1846px;top:1196px;width:190px;line-height:41px">仓库总库存<span class="co">:</span><span class="n">5747777</span></div>
</div>
<div class="abs" style="left:253px;top:398.7px;width:66px;height:238px;border:4.3px solid #ff4b5f;border-radius:6px"></div>
<div class="abs" style="left:1813px;top:1116px;width:143px;height:65px;border:4.3px solid #ff4b5f;border-radius:6px"></div>
<svg class="ico" style="left:0;top:0" width="1980" height="1230" viewBox="0 0 1980 1230">
<path d="M493 557.8 L493.6 558.8 L1797 1098.5 L1802 1089 Z" fill="#ff4b5f"/>
<path d="M1814 1101 L1801.8 1085.5 L1794 1104 Z" fill="#ff4b5f"/>
</svg>
</body></html>
